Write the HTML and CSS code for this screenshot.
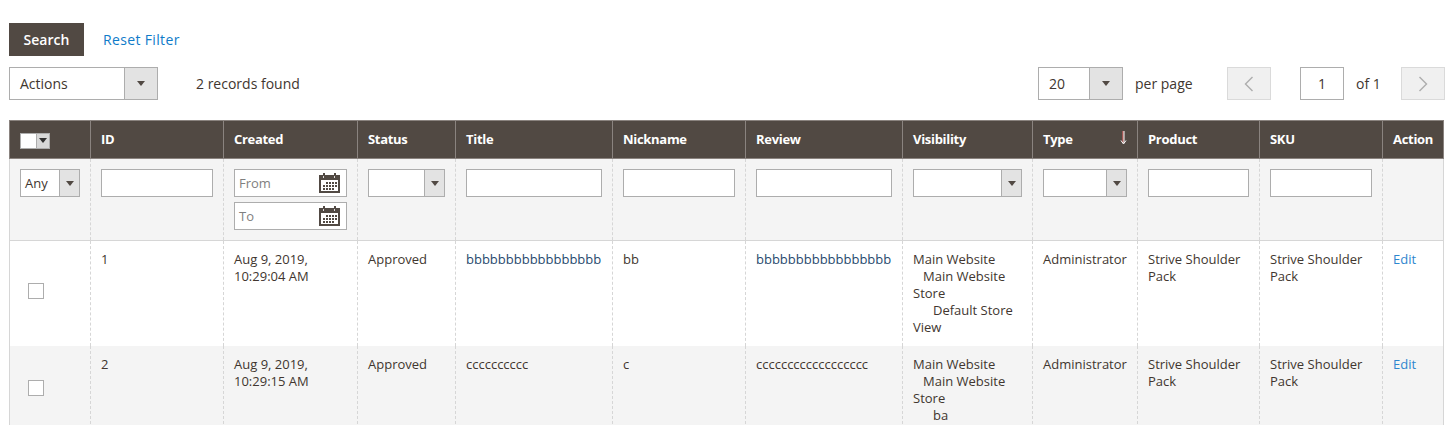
FILE: index.html
```html
<!DOCTYPE html>
<html lang="en">
<head>
<meta charset="utf-8">
<title>Reviews</title>
<link rel="stylesheet" href="styles.css">
</head>
<body>
<div class="page">
  <div class="actions-row">
    <button class="btn-search">Search</button>
    <a class="reset" href="#">Reset Filter</a>
  </div>
  <div class="toolbar">
    <div class="left">
      <div class="select select-actions"><span class="val">Actions</span><span class="arrow"><i></i></span></div>
      <span class="records">2 records found</span>
    </div>
    <div class="right">
      <div class="select select-page"><span class="val">20</span><span class="arrow"><i></i></span></div>
      <span class="perpage">per page</span>
      <span class="pager">
        <svg width="10" height="16" viewBox="0 0 10 16"><path d="M8.5 1 1.5 8l7 7" fill="none" stroke="#adadad" stroke-width="1.4"/></svg>
      </span>
      <span class="page-input">1</span>
      <span class="of">of 1</span>
      <span class="pager pager-next">
        <svg width="10" height="16" viewBox="0 0 10 16"><path d="M1.5 1l7 7-7 7" fill="none" stroke="#adadad" stroke-width="1.4"/></svg>
      </span>
    </div>
  </div>
  <table class="grid">
    <colgroup>
      <col class="c1"><col class="c2"><col class="c3"><col class="c4"><col class="c5"><col class="c6"><col class="c7"><col class="c8"><col class="c9"><col class="c10"><col class="c11"><col class="c12">
    </colgroup>
    <thead>
      <tr class="head">
        <th><span class="mass"><span class="mass-box"></span><span class="mass-arrow"><i></i></span></span></th>
        <th>ID</th><th>Created</th><th>Status</th><th>Title</th><th>Nickname</th><th>Review</th><th>Visibility</th>
        <th class="sorted">Type<svg class="sort" width="7" height="14" viewBox="0 0 7 14"><path d="M3 0v12" stroke="#e66" stroke-width="1" fill="none"/><path d="M4 0v12" stroke="#fff" stroke-width="1" fill="none"/><path d="M1 9.5 3.5 13 6 9.5" stroke="#fff" stroke-width="1" fill="none"/></svg></th>
        <th>Product</th><th>SKU</th><th>Action</th>
      </tr>
      <tr class="filters">
        <td><div class="select select-any"><span class="val">Any</span><span class="arrow"><i></i></span></div></td>
        <td><span class="input"></span></td>
        <td>
          <div class="date-wrap">
            <div class="input date"><span>From</span><svg class="cal" width="21" height="20" viewBox="0 0 21 20"><path fill="#514943" d="M0 2h4V0h2v2h9V0h2v2h4v18H0z"/><rect x="2" y="7" width="17" height="11" fill="#fff"/><path fill="#514943" d="M7 9h2v2H7zM10 9h2v2h-2zM13 9h2v2h-2zM16 9h2v2h-2zM4 12h2v2H4zM7 12h2v2H7zM10 12h2v2h-2zM13 12h2v2h-2zM16 12h2v2h-2zM4 15h2v2H4zM7 15h2v2H7zM10 15h2v2h-2zM13 15h2v2h-2z"/><path fill="#fff" d="M4 3h.8v2H4zM15 3h.8v2H15z"/></svg></div>
            <div class="input date"><span>To</span><svg class="cal" width="21" height="20" viewBox="0 0 21 20"><path fill="#514943" d="M0 2h4V0h2v2h9V0h2v2h4v18H0z"/><rect x="2" y="7" width="17" height="11" fill="#fff"/><path fill="#514943" d="M7 9h2v2H7zM10 9h2v2h-2zM13 9h2v2h-2zM16 9h2v2h-2zM4 12h2v2H4zM7 12h2v2H7zM10 12h2v2h-2zM13 12h2v2h-2zM16 12h2v2h-2zM4 15h2v2H4zM7 15h2v2H7zM10 15h2v2h-2zM13 15h2v2h-2z"/><path fill="#fff" d="M4 3h.8v2H4zM15 3h.8v2H15z"/></svg></div>
          </div>
        </td>
        <td><div class="select"><span class="val"></span><span class="arrow"><i></i></span></div></td>
        <td><span class="input"></span></td>
        <td><span class="input"></span></td>
        <td><span class="input"></span></td>
        <td><div class="select"><span class="val"></span><span class="arrow"><i></i></span></div></td>
        <td><div class="select"><span class="val"></span><span class="arrow"><i></i></span></div></td>
        <td><span class="input"></span></td>
        <td><span class="input"></span></td>
        <td></td>
      </tr>
    </thead>
    <tbody>
      <tr class="row row-1">
        <td class="check"><span class="checkbox"></span></td>
        <td>1</td>
        <td>Aug 9, 2019,<br>10:29:04 AM</td>
        <td>Approved</td>
        <td class="lnk">bbbbbbbbbbbbbbbbb</td>
        <td>bb</td>
        <td class="lnk">bbbbbbbbbbbbbbbbb</td>
        <td>Main Website<br><span class="ind1">Main Website</span><br>Store<br><span class="ind2">Default Store</span><br>View</td>
        <td>Administrator</td>
        <td>Strive Shoulder Pack</td>
        <td>Strive Shoulder Pack</td>
        <td><a class="edit" href="#">Edit</a></td>
      </tr>
      <tr class="row row-2">
        <td class="check"><span class="checkbox"></span></td>
        <td>2</td>
        <td>Aug 9, 2019,<br>10:29:15 AM</td>
        <td>Approved</td>
        <td>cccccccccc</td>
        <td>c</td>
        <td>cccccccccccccccccc</td>
        <td>Main Website<br><span class="ind1">Main Website</span><br>Store<br><span class="ind2">ba</span></td>
        <td>Administrator</td>
        <td>Strive Shoulder Pack</td>
        <td>Strive Shoulder Pack</td>
        <td><a class="edit" href="#">Edit</a></td>
      </tr>
    </tbody>
  </table>
</div>
</body>
</html>
```
FILE: styles.css
```css
html, body { margin: 0; padding: 0; height: 425px; overflow: hidden; background: #fff; }
body { font-family: "Open Sans", sans-serif; font-size: 14px; color: #41362f; }
.page { padding: 23px 7px 0 9px; }

.actions-row { display: flex; align-items: center; height: 33px; }
.btn-search { width: 75px; height: 33px; border: 0; padding: 0; background: #514943; color: #fff; font: 600 14px "Open Sans", sans-serif; }
.reset { margin-left: 19px; color: #0f7bc9; text-decoration: none; font-size: 14px; letter-spacing: .35px; }

.toolbar { display: flex; justify-content: space-between; align-items: center; margin-top: 11px; height: 33px; margin-right: -1px; }
.left, .right { display: flex; align-items: center; }
.select { display: flex; box-sizing: border-box; height: 28px; border: 1px solid #adadad; background: #fff; }
.select .val { flex: 1; padding-left: 10px; line-height: 26px; }
.select .arrow { display: flex; align-items: center; justify-content: center; width: 19px; background: #e3e3e3; border-left: 1px solid #adadad; }
.arrow i { display: block; width: 0; height: 0; border-style: solid; border-width: 5px 4px 0; border-color: #514943 transparent transparent; }
.select-actions { width: 149px; height: 33px; }
.select-actions .val { line-height: 31px; }
.select-actions .arrow { width: 32px; }
.records { margin-left: 38px; }
.select-page { width: 85px; height: 33px; }
.select-page .val { line-height: 31px; padding-left: 10px; }
.select-page .arrow { width: 32px; }
.perpage { margin-left: 12px; width: 92px; }
.pager { display: flex; align-items: center; justify-content: center; box-sizing: border-box; width: 44px; height: 33px; background: #f0f0f0; border: 1px solid #dadada; }
.page-input { box-sizing: border-box; width: 44px; height: 33px; margin-left: 29px; border: 1px solid #adadad; text-align: center; line-height: 31px; }
.of { margin-left: 12px; width: 45px; }

.grid { table-layout: fixed; border-collapse: collapse; width: 1434px; margin-top: 20px; }
.c1 { width: 81px; } .c2 { width: 133px; } .c3 { width: 134px; } .c4 { width: 98px; }
.c5 { width: 157px; } .c6 { width: 133px; } .c7 { width: 157px; } .c8 { width: 130px; }
.c9 { width: 105px; } .c10 { width: 122px; } .c11 { width: 123px; } .c12 { width: 61px; }

.head th { height: 38px; box-sizing: border-box; padding: 0 10px 2px; background: #514943; color: #fff; font-weight: 700; font-size: 13px; letter-spacing: -.3px; text-align: left; border: 1px solid #8a837f; white-space: nowrap; position: relative; }
.sort { position: absolute; top: 10px; right: 10px; }
.mass { display: flex; width: 30px; height: 16px; margin-top: 4px; border: 1px solid #adadad; box-sizing: border-box; background: #fff; }
.mass-box { width: 15px; }
.mass-arrow { flex: 1; display: flex; align-items: center; justify-content: center; background: #d8d8d8; border-left: 1px solid #adadad; }
.mass-arrow i { display: block; width: 0; height: 0; border-style: solid; border-width: 5px 4px 0; border-color: #303030 transparent transparent; }

.filters td { height: 82px; box-sizing: border-box; padding: 10px 10px 0; vertical-align: top; background: #f4f4f4; border-left: 1px dashed #d6d6d6; border-right: 1px dashed #d6d6d6; border-bottom: 1px solid #d6d6d6; }
.filters td:first-child { border-left: 1px solid #d6d6d6; }
.filters td:last-child { border-right: 1px solid #d6d6d6; }
.input { display: block; box-sizing: border-box; height: 28px; border: 1px solid #adadad; background: #fff; }
.select-any .val { padding-left: 4px; font-size: 13px; }
.date-wrap { display: flex; flex-direction: column; gap: 5px; }
.date { display: flex; align-items: center; justify-content: space-between; padding: 0 6px 0 4px; color: #7f7f7f; font-size: 13px; }

.row td { box-sizing: border-box; padding: 10px 10px 0; vertical-align: top; font-size: 13px; line-height: 17px; border-left: 1px dashed #d6d6d6; border-right: 1px dashed #d6d6d6; }
.row td:first-child { border-left: 1px solid #d6d6d6; }
.row td:last-child { border-right: 1px solid #d6d6d6; }
.row-1 td { height: 105px; background: #fff; }
.row-2 td { height: 88px; background: #f4f4f4; }
.row td.check { vertical-align: middle; padding: 0 0 4px 18px; }
.checkbox { display: block; box-sizing: border-box; width: 16px; height: 16px; border: 1px solid #adadad; background: #fff; }
.lnk { color: #27496d; }
.edit { color: #2d86cf; text-decoration: none; }
.ind1 { padding-left: 10px; }
.ind2 { padding-left: 20px; }
```
